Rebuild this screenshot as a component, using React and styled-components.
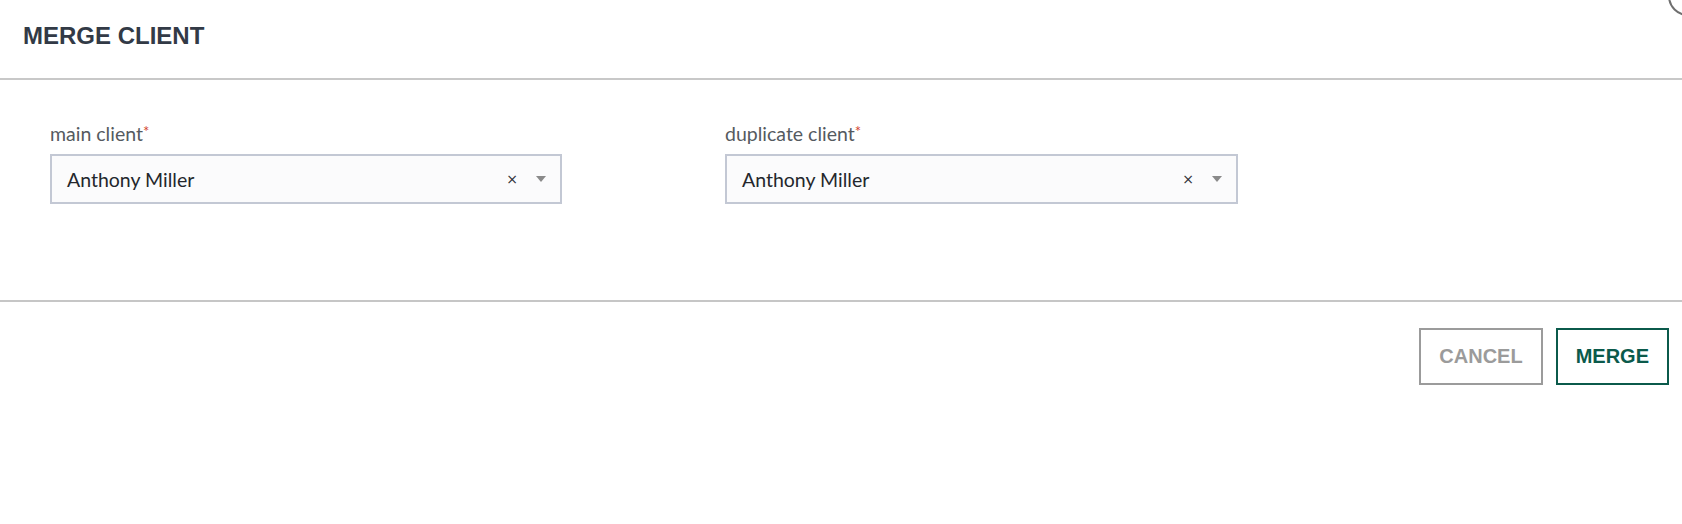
import styled, { createGlobalStyle } from "styled-components";

const GlobalStyle = createGlobalStyle`
	html, body {
		margin: 0;
		padding: 0;
		background: #ffffff;
	}
	* {
		box-sizing: border-box;
	}
`;

const Modal = styled.div`
	position: relative;
	width: 1682px;
	height: 524px;
	background: #ffffff;
	overflow: hidden;
	font-family: "Lato", "Liberation Sans", sans-serif;
`;

const CloseRing = styled.div`
	position: absolute;
	top: -24px;
	right: -26px;
	width: 40px;
	height: 40px;
	border-radius: 50%;
	border: 2px solid #6f6f6f;
`;

const Header = styled.header`
	height: 80px;
	padding: 0 23px 2px;
	display: flex;
	align-items: center;
	border-bottom: 2px solid #c8c8c8;
`;

const Title = styled.h2`
	margin: 0;
	font-family: "Liberation Sans", Arial, sans-serif;
	font-size: 24px;
	font-weight: 700;
	color: #323a46;
	line-height: 1;
	padding-bottom: 4px;
`;

const Body = styled.section`
	height: 222px;
	padding: 42px 50px 0;
	display: flex;
	gap: 163px;
	border-bottom: 2px solid #c6c6c6;
`;

const Field = styled.div`
	width: ${(p) => p.$width}px;
	display: flex;
	flex-direction: column;
	gap: 8px;
`;

const Label = styled.label`
	font-size: 19.5px;
	color: #555a60;
	line-height: 24px;
`;

const Required = styled.span`
	color: #d2432d;
	font-size: 15px;
	vertical-align: top;
	line-height: 18px;
`;

const SelectBox = styled.div`
	height: 50px;
	border: 2px solid #c3c8d4;
	background: #fbfbfc;
	display: flex;
	align-items: center;
	padding: 0 14px 0 15px;
`;

const Value = styled.span`
	flex: 1;
	font-size: 19.5px;
	color: #24272c;
`;

const Clear = styled.span`
	font-family: "DejaVu Sans", sans-serif;
	font-size: 14px;
	color: #2d3036;
	margin-right: 18px;
	line-height: 1;
`;

const Caret = styled.span`
	width: 0;
	height: 0;
	border-left: 5px solid transparent;
	border-right: 5px solid transparent;
	border-top: 6px solid #8a8a8a;
`;

const Footer = styled.footer`
	display: flex;
	justify-content: flex-end;
	gap: 13px;
	padding: 26px 13px 0;
`;

const Button = styled.button`
	height: 57px;
	padding: 0 18px;
	background: #ffffff;
	border: 2px solid ${(p) => (p.$primary ? "#0b5a4b" : "#9b9b9b")};
	color: ${(p) => (p.$primary ? "#0b5a4b" : "#9b9b9b")};
	font-family: "Liberation Sans", Arial, sans-serif;
	font-size: 20px;
	font-weight: 700;
	cursor: pointer;
`;

function ClientSelect({ label, value, width }) {
	return (
		<Field $width={width}>
			<Label>
				{label}
				<Required>*</Required>
			</Label>
			<SelectBox>
				<Value>{value}</Value>
				<Clear>×</Clear>
				<Caret />
			</SelectBox>
		</Field>
	);
}

export default function App() {
	return (
		<>
			<GlobalStyle />
			<Modal>
				<CloseRing />
				<Header>
					<Title>MERGE CLIENT</Title>
				</Header>
				<Body>
					<ClientSelect label="main client" value="Anthony Miller" width={512} />
					<ClientSelect
						label="duplicate client"
						value="Anthony Miller"
						width={513}
					/>
				</Body>
				<Footer>
					<Button>CANCEL</Button>
					<Button $primary>MERGE</Button>
				</Footer>
			</Modal>
		</>
	);
}
